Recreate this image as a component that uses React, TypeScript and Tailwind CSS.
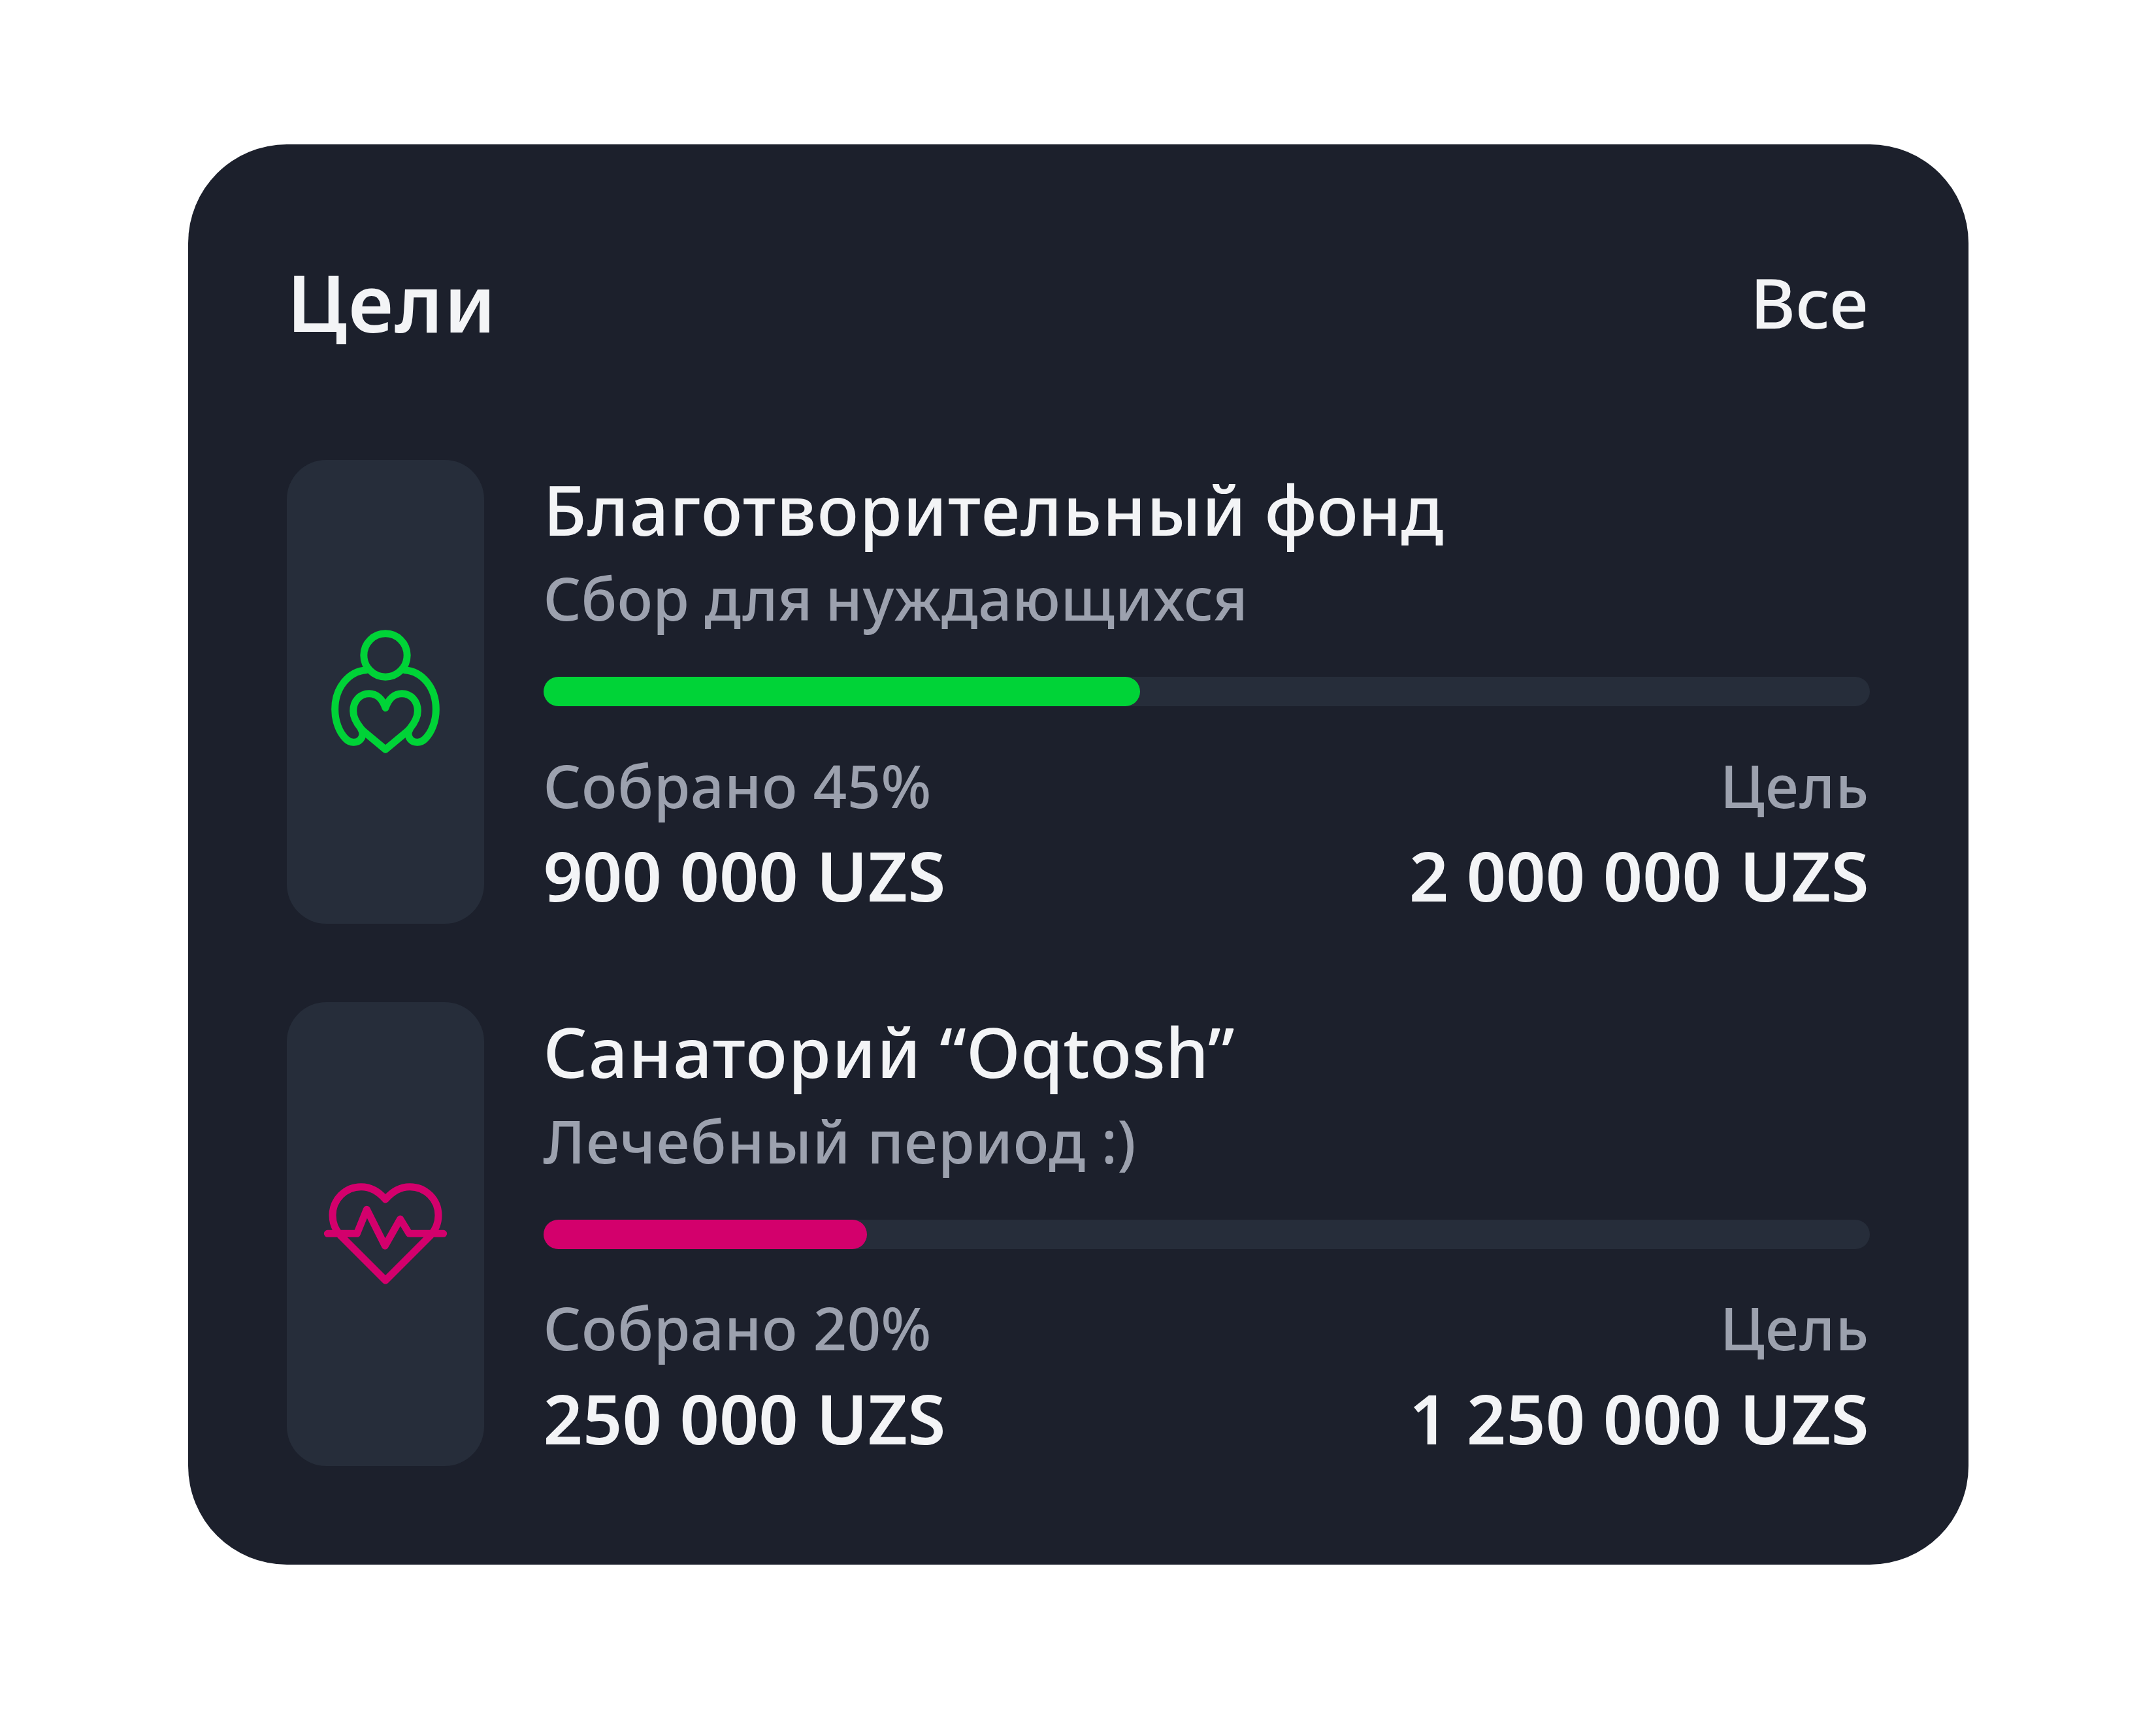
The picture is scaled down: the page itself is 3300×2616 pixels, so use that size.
import React from "react";

type Goal = {
  title: React.ReactNode;
  note: React.ReactNode;
  percentLabel: string;
  amount: string;
  target: string;
  percent: number;
  bar: string;
  icon: React.ReactNode;
};

const CharityIcon = () => (
  <svg
    className="size-[240px] shrink-0 text-[#00d337]"
    viewBox="0 -3 720 720"
    fill="none"
    stroke="currentColor"
    strokeWidth="33"
    strokeLinecap="round"
    strokeLinejoin="round"
  >
    <circle cx="360" cy="189" r="99.5" />
    <path d="M360 431C346 388 318 365 285 365C242 365 212 400 212 445C212 478 228 502 248 526C256 535 262 540 268 545L360 622L452 545C458 540 464 535 472 526C492 502 508 478 508 445C508 400 478 365 435 365C402 365 374 388 360 431Z" />
    <path d="M272 257C190 262 128 340 128 437C128 492 148 543 178 573C198 593 228 594 244 577C257 562 258 544 248 528" />
    <path d="M448 257C530 262 592 340 592 437C592 492 572 543 542 573C522 593 492 594 476 577C463 562 462 544 472 528" />
  </svg>
);

const HealthIcon = () => (
  <svg
    className="size-[240px] shrink-0 text-[#d3006c]"
    viewBox="0 -1 720 720"
    fill="none"
    stroke="currentColor"
    strokeWidth="33"
    strokeLinecap="round"
    strokeLinejoin="round"
  >
    <path d="M360 200C331 166 292 142 248 142A131 131 0 0 0 117 273C117 308 131 341 153 365L360 572L567 365C589 341 603 308 603 273A131 131 0 0 0 472 142C428 142 389 166 360 200Z" />
    <path d="M94 357H229L274 246L358 413L428 290L469 357H626" />
  </svg>
);

const goals: Goal[] = [
  {
    title: (
      <>
        <span className="tracking-[1.4px]">Благотворительный</span>
        <span className="tracking-[-0.4px]"> фонд</span>
      </>
    ),
    note: (
      <>
        Сбор для<span className="tracking-[-4px]"> </span>
        <span className="tracking-[0.5px]">нуждающихся</span>
      </>
    ),
    percentLabel: "45%",
    amount: "900 000 UZS",
    target: "2 000 000 UZS",
    percent: 45,
    bar: "bg-[#00d337]",
    icon: <CharityIcon />,
  },
  {
    title: (
      <>
        <span className="tracking-[1.5px]">Санаторий</span> “Oqtosh”
      </>
    ),
    note: (
      <>
        <span className="tracking-[1.4px]">Лечебный</span>
        <span className="tracking-[0.8px]"> период</span> :)
      </>
    ),
    percentLabel: "20%",
    amount: "250 000 UZS",
    target: "1 250 000 UZS",
    percent: 24.4,
    bar: "bg-[#d3006c]",
    icon: <HealthIcon />,
  },
];

const GoalRow = ({ goal }: { goal: Goal }) => (
  <div className="flex h-[709.84px] gap-[90.5px]">
    <div className="flex w-[302px] shrink-0 items-center justify-center rounded-[60.4px] bg-[#262d3a]">
      {goal.icon}
    </div>
    <div className="flex min-w-0 flex-1 flex-col">
      <div className="text-[105.72px] leading-[151.03px] font-medium">{goal.title}</div>
      <div className="text-[90.62px] leading-[120.82px] font-medium text-[#9ca1ae]">{goal.note}</div>
      <div className="my-[60.41px] h-[45.31px] shrink-0 rounded-full bg-[#262d3a]">
        <div className={`h-full rounded-full ${goal.bar}`} style={{ width: `${goal.percent}%` }} />
      </div>
      <div className="flex justify-between text-[90.62px] leading-[121.5px] font-medium text-[#9ca1ae]">
        <span>
          <span className="tracking-[0.5px]">Собрано</span> {goal.percentLabel}
        </span>
        <span className="tracking-[1.3px]">Цель</span>
      </div>
      <div className="flex justify-between pt-px pr-px text-[105.72px] leading-[151.03px] font-semibold">
        <span>{goal.amount}</span>
        <span>{goal.target}</span>
      </div>
    </div>
  </div>
);

export default function App() {
  return (
    <div className="flex h-[2616px] w-[3300px] items-center bg-white pl-[288px] font-['Noto_Sans',sans-serif] whitespace-nowrap text-[#f3f4f6]">
      <section className="flex h-[2174.84px] w-[2724.6px] flex-col rounded-[151.03px] bg-[#1c202c] p-[151.03px]">
        <header className="mb-[151.03px] flex h-[181.24px] items-center justify-between pt-px pr-[2px]">
          <h1 className="text-[120.82px] leading-[181.24px] font-semibold tracking-[2px]">Цели</h1>
          <a className="text-[105.72px] leading-[181.24px] font-medium">Все</a>
        </header>
        <div className="flex flex-col gap-[120.82px]">
          {goals.map((goal) => (
            <GoalRow key={goal.target} goal={goal} />
          ))}
        </div>
      </section>
    </div>
  );
}
